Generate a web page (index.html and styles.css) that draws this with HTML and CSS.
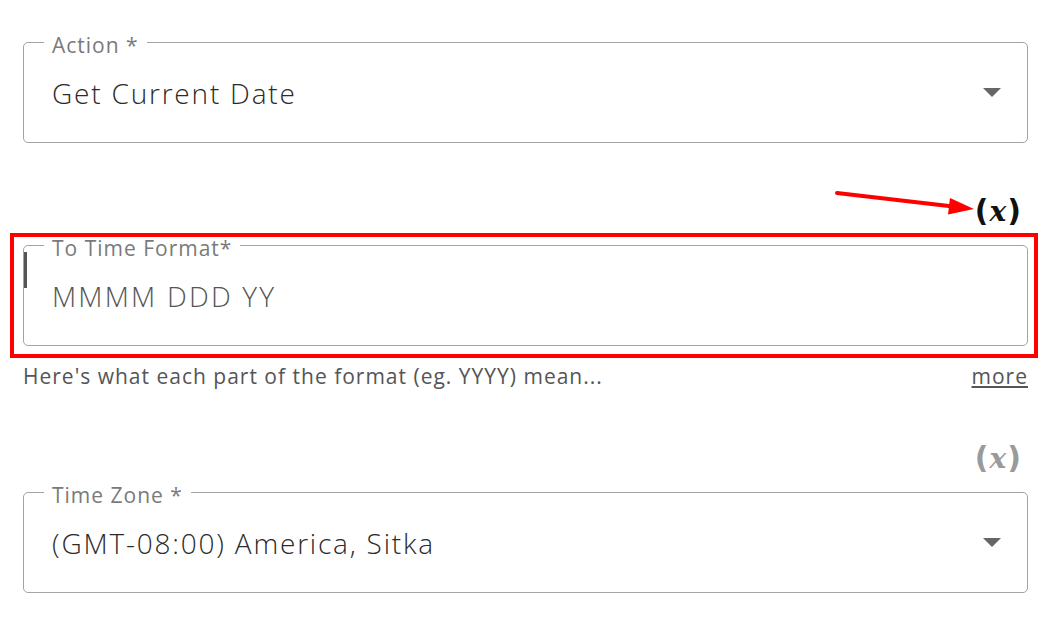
FILE: index.html
```html
<!DOCTYPE html>
<html lang="en">
<head>
    <meta charset="UTF-8">
    <meta name="viewport" content="width=device-width, initial-scale=1.0">
    <title>Get Current Date</title>
    <link rel="stylesheet" href="styles.css">
</head>
<body>
    <main class="form">
        <div class="field">
            <span class="field-label">Action *</span>
            <div class="field-value">Get Current Date</div>
            <span class="caret"></span>
        </div>

        <div class="var-row">
            <span class="var var-active">(<i>x</i>)</span>
        </div>

        <div class="field-wrap">
            <div class="field">
                <span class="field-label">To Time Format*</span>
                <span class="cursor"></span>
                <div class="field-value muted">MMMM DDD YY</div>
            </div>
            <div class="highlight"></div>
        </div>

        <div class="helper">
            <span>Here's what each part of the format (eg. YYYY) mean...</span>
            <a href="#" class="more">more</a>
        </div>

        <div class="var-row">
            <span class="var">(<i>x</i>)</span>
        </div>

        <div class="field">
            <span class="field-label">Time Zone *</span>
            <div class="field-value">(GMT-08:00) America, Sitka</div>
            <span class="caret"></span>
        </div>

        <!-- annotation arrow pointing at the variable button -->
        <svg class="arrow" width="150" height="36" viewBox="0 0 150 36">
            <line x1="7" y1="8" x2="121" y2="21.3" stroke="#f00" stroke-width="4" stroke-linecap="round"/>
            <polygon points="144,24 120,13 118,29.5" fill="#f00"/>
        </svg>
    </main>
</body>
</html>
```

FILE: styles.css
```css
body {
    margin: 0;
    padding: 0;
    background-color: #fff;
    font-family: 'Open Sans', 'Noto Sans', sans-serif;
    color: #333;
}

.form {
    position: relative;
    display: flex;
    flex-direction: column;
    padding: 42px 32px 0 23px;
}

.field {
    position: relative;
    height: 101px;
    box-sizing: border-box;
    border: 1px solid #a3a3a3;
    border-radius: 5px;
    padding: 32px 28px 0 28px;
}

.field-label {
    position: absolute;
    top: -8px;
    left: 20px;
    padding: 0 8px;
    background-color: #fff;
    color: #7a7a7a;
    font-size: 21px;
    line-height: 21px;
    letter-spacing: 1px;
}

.field-value {
    font-size: 28px;
    line-height: 36px;
    font-weight: 350;
    color: #2b2b2b;
    letter-spacing: 1.8px;
}

.field-value.muted {
    color: #555;
    letter-spacing: 2.2px;
}

.caret {
    position: absolute;
    top: 45px;
    right: 26px;
    width: 0;
    height: 0;
    border-left: 9px solid transparent;
    border-right: 9px solid transparent;
    border-top: 9px solid #666;
}

.cursor {
    position: absolute;
    top: 6px;
    left: 0;
    width: 3px;
    height: 36px;
    background-color: #555;
}

.var-row {
    display: flex;
    justify-content: flex-end;
    align-items: flex-end;
    height: 102px;
    box-sizing: border-box;
    padding: 0 7px 16px 0;
}

.var {
    font-family: 'DejaVu Sans', sans-serif;
    font-weight: bold;
    font-size: 30px;
    line-height: 34px;
    color: #9a9a9a;
}

.var i {
    font-family: 'DejaVu Serif', serif;
    font-style: italic;
    font-size: 28px;
    padding: 0 1px;
}

.var-active {
    color: #111;
}

.field-wrap {
    position: relative;
}

.highlight {
    position: absolute;
    top: -12px;
    left: -13px;
    right: -10px;
    bottom: -12px;
    border: 4px solid #f00;
}

.helper {
    display: flex;
    justify-content: space-between;
    margin-top: 16px;
    font-size: 21px;
    line-height: 28px;
    letter-spacing: 1px;
    color: #555;
}

.more {
    color: #555;
    text-decoration: underline;
}

.arrow {
    position: absolute;
    top: 185px;
    left: 830px;
}
```
